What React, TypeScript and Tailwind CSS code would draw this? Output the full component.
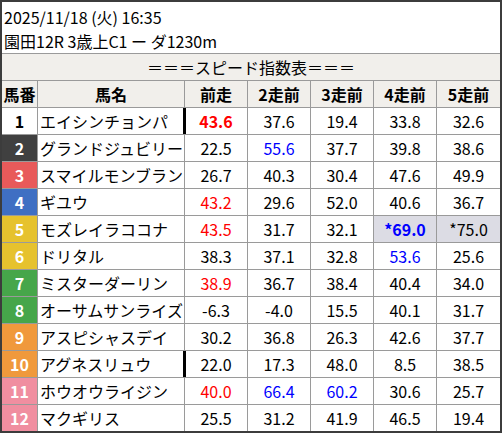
import type { ReactNode } from "react";

type Val = { v: string; c?: "r" | "b"; bold?: boolean; bg?: boolean };
type Row = { no: number; name: string; bar?: boolean; vals: (string | Val)[] };

const waku: Record<number, string> = {
  1: "bg-white text-black",
  2: "bg-[#404040] text-white",
  3: "bg-[#e85a5a] text-white",
  4: "bg-[#3f6fc3] text-white",
  5: "bg-[#e6c22e] text-white",
  6: "bg-[#e6c22e] text-white",
  7: "bg-[#46a64a] text-white",
  8: "bg-[#46a64a] text-white",
  9: "bg-[#f0993c] text-white",
  10: "bg-[#f0993c] text-white",
  11: "bg-[#f08ea0] text-white",
  12: "bg-[#f08ea0] text-white",
};

const rows: Row[] = [
  { no: 1, name: "エイシンチョンパ", bar: true, vals: [{ v: "43.6", c: "r", bold: true }, "37.6", "19.4", "33.8", "32.6"] },
  { no: 2, name: "グランドジュビリー", vals: ["22.5", { v: "55.6", c: "b" }, "37.7", "39.8", "38.6"] },
  { no: 3, name: "スマイルモンブラン", vals: ["26.7", "40.3", "30.4", "47.6", "49.9"] },
  { no: 4, name: "ギユウ", vals: [{ v: "43.2", c: "r" }, "29.6", "52.0", "40.6", "36.7"] },
  {
    no: 5,
    name: "モズレイラココナ",
    vals: [{ v: "43.5", c: "r" }, "31.7", "32.1", { v: "*69.0", c: "b", bold: true, bg: true }, { v: "*75.0", bg: true }],
  },
  { no: 6, name: "ドリタル", vals: ["38.3", "37.1", "32.8", { v: "53.6", c: "b" }, "25.6"] },
  { no: 7, name: "ミスターダーリン", vals: [{ v: "38.9", c: "r" }, "36.7", "38.4", "40.4", "34.0"] },
  { no: 8, name: "オーサムサンライズ", vals: ["-6.3", "-4.0", "15.5", "40.1", "31.7"] },
  { no: 9, name: "アスピシャスデイ", vals: ["30.2", "36.8", "26.3", "42.6", "37.7"] },
  { no: 10, name: "アグネスリュウ", bar: true, vals: ["22.0", "17.3", "48.0", "8.5", "38.5"] },
  { no: 11, name: "ホウオウライジン", vals: [{ v: "40.0", c: "r" }, { v: "66.4", c: "b" }, { v: "60.2", c: "b" }, "30.6", "25.7"] },
  { no: 12, name: "マクギリス", vals: ["25.5", "31.2", "41.9", "46.5", "19.4"] },
];

const heads = ["前走", "2走前", "3走前", "4走前", "5走前"];

function GridRow({ children, className = "" }: { children: ReactNode; className?: string }) {
  return (
    <div className={`grid h-[27px] grid-cols-[36px_147px_repeat(5,1fr)] border-t border-[#9a9a9a] ${className}`}>
      {children}
    </div>
  );
}

function Cell({ val, bar, last }: { val: string | Val; bar?: boolean; last: boolean }) {
  const d: Val = typeof val === "string" ? { v: val } : val;
  const color = d.c === "r" ? "text-[#ff0000]" : d.c === "b" ? "text-[#0000ff]" : "text-black";
  return (
    <div
      className={`relative text-center leading-[26px] ${color} ${d.bold ? "font-bold" : ""} ${
        d.bg ? "bg-[#dcdce4]" : ""
      } ${last ? "" : "border-r border-[#9a9a9a]"}`}
    >
      {bar && <span className="absolute top-0 bottom-0 left-[-2px] w-[3px] bg-black" />}
      {d.v}
    </div>
  );
}

export default function App() {
  return (
    <div className="h-[434px] w-[502px] bg-white">
      <div className="w-[502px] border-2 border-[#3c3c3c] bg-white font-['Noto_Sans_CJK_JP',sans-serif] text-[16px] text-black">
        <div className="pt-[3px] pl-[2px] leading-[24px]">
          <div>2025/11/18 (火) 16:35</div>
          <div>園田12R 3歳上C1 ー ダ1230m</div>
        </div>

        <div className="h-[27px] border-t border-[#9a9a9a] bg-[#f1efeb] text-center leading-[26px]">
          ＝＝＝スピード指数表＝＝＝
        </div>

        <GridRow className="bg-[#f1efeb] font-bold">
          <div className="border-r border-[#9a9a9a] text-center leading-[26px]">馬番</div>
          <div className="border-r border-[#9a9a9a] text-center leading-[26px]">馬名</div>
          {heads.map((h, i) => (
            <div
              key={h}
              className={`text-center leading-[26px] ${i < 4 ? "border-r border-[#9a9a9a]" : ""}`}
            >
              {h}
            </div>
          ))}
        </GridRow>

        {rows.map((r) => (
          <GridRow key={r.no}>
            <div className={`border-r border-[#9a9a9a] text-center font-bold leading-[26px] ${waku[r.no]}`}>
              {r.no}
            </div>
            <div className="border-r border-[#9a9a9a] pl-[2px] leading-[26px] whitespace-nowrap">{r.name}</div>
            {r.vals.map((v, i) => (
              <Cell key={i} val={v} bar={i === 0 && r.bar} last={i === 4} />
            ))}
          </GridRow>
        ))}
      </div>
    </div>
  );
}
